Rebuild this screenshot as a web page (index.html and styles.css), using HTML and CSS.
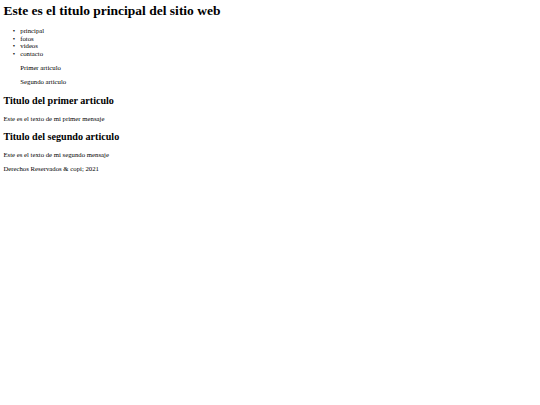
FILE: index.html
```html
<!DOCTYPE html>
<html lang="es">
<head>
<meta charset="utf-8">
<title>Sitio web</title>
<link rel="stylesheet" href="styles.css">
</head>
<body>
<header class="site-header">
<h1 class="site-title">Este es el titulo principal del sitio web</h1>
<nav class="main-nav">
<ul class="nav-list">
<li class="nav-item">principal</li>
<li class="nav-item">fotos</li>
<li class="nav-item">videos</li>
<li class="nav-item">contacto</li>
</ul>
</nav>
</header>
<aside class="side">
<p class="side-item">Primer articulo</p>
<p class="side-item">Segundo articulo</p>
</aside>
<main class="content">
<article class="post">
<h2 class="post-title">Titulo del primer articulo</h2>
<p class="post-text">Este es el texto de mi primer mensaje</p>
</article>
<article class="post">
<h2 class="post-title">Titulo del segundo articulo</h2>
<p class="post-text">Este es el texto de mi segundo mensaje</p>
</article>
</main>
<footer class="site-footer">
<p class="footer-text">Derechos Reservados &amp; copi; 2021</p>
</footer>
</body>
</html>
```

FILE: styles.css
```css
html {
  background: #fff;
}
body {
  margin: 3.375px;
  font-family: "Liberation Serif", "Times New Roman", serif;
  font-size: 6.75px;
  line-height: 7.7625px;
  color: #000;
}
.site-title {
  font-size: 13.5px;
  line-height: 15.525px;
  font-weight: bold;
  margin: 0 0 8.3px;
}
.nav-list {
  margin: 6.75px 0;
  padding-left: 16.875px;
  list-style: none;
}
.nav-item {
  line-height: 7.5px;
}
.nav-item::before {
  content: "\2022";
  display: inline-block;
  width: 7.5px;
  margin-left: -7.5px;
}
.side {
  padding-left: 16.875px;
}
.side-item {
  margin: 6.75px 0;
}
.post-title {
  font-size: 10.125px;
  line-height: 11.64px;
  font-weight: bold;
  margin: 8.4px 0;
}
.post-text {
  margin: 6.75px 0;
}
.footer-text {
  margin: 6.75px 0;
}
```
